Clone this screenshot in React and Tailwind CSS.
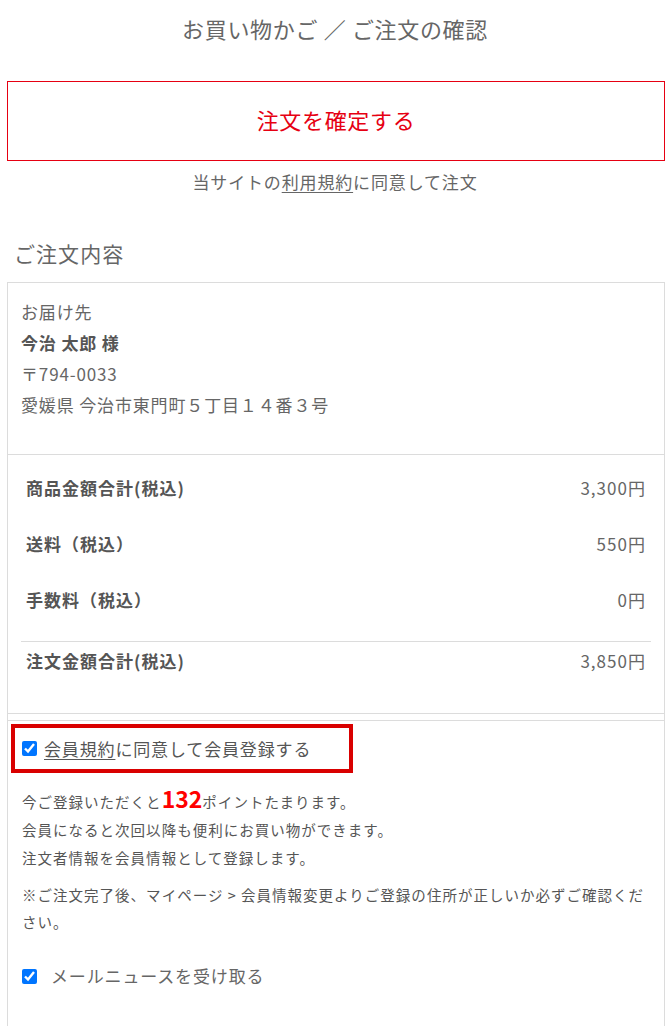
import React from "react";

const FONT = "font-['Noto_Sans_CJK_JP','Noto_Sans',sans-serif]";

const ROWS = [
  { label: "商品金額合計(税込)", value: "3,300円" },
  { label: "送料（税込）", value: "550円" },
  { label: "手数料（税込）", value: "0円" },
];

export default function App() {
  return (
    <div className={`min-h-screen bg-white ${FONT} text-[#595959]`}>
      {/* Header */}
      <h1 className="pt-[13px] text-center text-[22px] leading-[30px] tracking-[0.03em] text-[#666]">お買い物かご ／ ご注文の確認</h1>

      {/* Confirm button */}
      <div className="ml-[7px] mr-[5px] mt-[38px]">
        <button className="w-full h-[80px] pb-[3px] border border-[#e60012] bg-white text-[#e60012] text-[22px] tracking-[0.03em]">注文を確定する</button>
      </div>
      <p className="mt-[9px] text-center text-[17px] leading-[24px] tracking-[0.05em] text-[#666]">
        当サイトの<span className="underline underline-offset-[3px]">利用規約</span>に同意して注文
      </p>

      <h2 className="mt-[44px] pl-[14px] text-[21px] leading-[30px] tracking-[0.05em] text-[#666]">ご注文内容</h2>

      <div className="mt-[14px] ml-[7px] mr-[5px] border-l border-r border-[#dcdcdc]">
        <div className="border-t border-b border-[#dcdcdc]">
          {/* Delivery */}
          <div className="border-b border-[#dcdcdc] pt-[13px] px-[13px] pb-[34px] text-[17px] leading-[31px] tracking-[0.05em]">
            <div className="text-[#666]">お届け先</div>
            <div className="font-bold text-[#555]">今治 太郎 様</div>
            <div className="text-[#666]">〒794-0033</div>
            <div className="text-[#666]">愛媛県 今治市東門町５丁目１４番３号</div>
          </div>

          {/* Totals */}
          <div className="px-[13px] pt-[5px] pb-[34px] text-[17px] tracking-[0.06em]">
            {ROWS.map(r => (
              <div key={r.label} className="h-[56px] px-[5px] flex items-center justify-between">
                <span className="font-bold text-[#555]">{r.label}</span>
                <span className="text-[#666]">{r.value}</span>
              </div>
            ))}
            <div className="mt-[13px] border-t border-[#dcdcdc] h-[38px] px-[5px] flex items-center justify-between">
              <span className="font-bold text-[#555]">注文金額合計(税込)</span>
              <span className="text-[#666]">3,850円</span>
            </div>
          </div>
        </div>

        <div className="h-[6px]" />

        {/* Membership */}
        <div className="border-t border-[#dcdcdc] pb-[60px]">
          <label className="mt-[3px] ml-[3px] w-[342px] h-[49px] border-4 border-[#d90000] pl-[7px] flex items-center gap-[7px] text-[17px] tracking-[0.05em] text-[#555]">
            <input type="checkbox" defaultChecked className="m-0 w-[15px] h-[15px]" />
            <span><span className="underline underline-offset-[3px]">会員規約</span>に同意して会員登録する</span>
          </label>

          <div className="px-[14px]">
            <p className="mt-[14px] text-[14.5px] leading-[28px] tracking-[0.07em] text-[#555]">
              今ご登録いただくと<span className="text-[23px] leading-none font-bold text-[#f00] tracking-normal">132</span>ポイントたまります。<br />
              会員になると次回以降も便利にお買い物ができます。<br />
              注文者情報を会員情報として登録します。
            </p>
            <p className="mt-[9px] text-[14.5px] leading-[27px] tracking-[0.07em] text-[#555]">
              ※ご注文完了後、マイページ &gt; 会員情報変更よりご登録の住所が正しいか必ずご確認ください。
            </p>
            <label className="mt-[29px] flex items-center gap-[14px] text-[17px] leading-[24px] tracking-[0.05em] text-[#666]">
              <input type="checkbox" defaultChecked className="m-0 w-[15px] h-[15px]" />
              <span>メールニュースを受け取る</span>
            </label>
          </div>
        </div>
      </div>
    </div>
  );
}
